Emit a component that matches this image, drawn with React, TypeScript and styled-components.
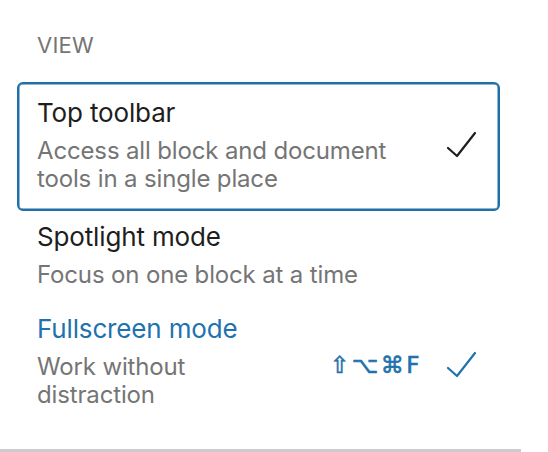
import styled, { createGlobalStyle } from "styled-components";

const GlobalStyle = createGlobalStyle`
  html, body {
    margin: 0;
    padding: 0;
    background: #ffffff;
  }
  body {
    font-family: Inter, "Noto Sans", "Liberation Sans", sans-serif;
    -webkit-font-smoothing: antialiased;
  }
`;

interface ViewOption {
  label: string;
  info: string;
  selected?: boolean;
  active?: boolean;
  checked?: boolean;
  shortcut?: string;
  infoWidth?: number;
}

const options: ViewOption[] = [
  {
    label: "Top toolbar",
    info: "Access all block and document tools in a single place",
    selected: true,
    checked: true,
  },
  {
    label: "Spotlight mode",
    info: "Focus on one block at a time",
  },
  {
    label: "Fullscreen mode",
    info: "Work without distraction",
    active: true,
    checked: true,
    shortcut: "⇧⌥⌘F",
    infoWidth: 230,
  },
];

function CheckIcon() {
  return (
    <svg width="32" height="32" viewBox="0 0 32 32" aria-hidden="true">
      <polyline
        points="2,19 11,27 29,4"
        fill="none"
        stroke="currentColor"
        strokeWidth="2.2"
        strokeLinecap="round"
        strokeLinejoin="round"
      />
    </svg>
  );
}

export default function App() {
  return (
    <>
      <GlobalStyle />
      <Panel>
        <GroupLabel>View</GroupLabel>
        <MenuGroup>
          {options.map((option) => (
            <MenuItem key={option.label} $selected={option.selected}>
              <ItemText $maxWidth={option.infoWidth}>
                <ItemLabel $active={option.active}>{option.label}</ItemLabel>
                <ItemInfo>{option.info}</ItemInfo>
              </ItemText>
              <Trailing $active={option.active}>
                {option.shortcut && <Shortcut>{option.shortcut}</Shortcut>}
                {option.checked && <CheckIcon />}
              </Trailing>
            </MenuItem>
          ))}
        </MenuGroup>
        <Separator />
      </Panel>
    </>
  );
}

const Panel = styled.div`
  width: 548px;
  height: 452px;
  overflow: hidden;
  padding-top: 31px;
  box-sizing: border-box;
`;

const GroupLabel = styled.div`
  margin-left: 37px;
  font-size: 22px;
  line-height: 28px;
  text-transform: uppercase;
  color: #757575;
  letter-spacing: 0.2px;
`;

const MenuGroup = styled.div`
  display: flex;
  flex-direction: column;
  margin: 23px 48px 0 17px;
`;

const MenuItem = styled.div<{ $selected?: boolean }>`
  display: flex;
  align-items: center;
  gap: 24px;
  border: 2px solid ${({ $selected }) => ($selected ? "#1f6fa8" : "transparent")};
  border-radius: 6px;
  box-shadow: ${({ $selected }) => ($selected ? "inset 0 0 0 0.5px #1f6fa8" : "none")};
  padding: ${({ $selected }) => ($selected ? "13px 20px 16px 18px" : "8px 20px 12px 18px")};
`;

const ItemText = styled.div<{ $maxWidth?: number }>`
  display: flex;
  flex-direction: column;
  gap: 8px;
  flex: 1;
  max-width: ${({ $maxWidth }) => ($maxWidth ? `${$maxWidth}px` : "none")};
  margin-right: auto;
  letter-spacing: -0.15px;
`;

const ItemLabel = styled.div<{ $active?: boolean }>`
  font-size: 26px;
  line-height: 32px;
  color: ${({ $active }) => ($active ? "#1f72ad" : "#1e1e1e")};
`;

const ItemInfo = styled.div`
  font-size: 24px;
  line-height: 28px;
  color: #757575;
`;

const Trailing = styled.div<{ $active?: boolean }>`
  display: flex;
  align-items: center;
  gap: 24px;
  padding-top: ${({ $active }) => ($active ? "7px" : "0")};
  color: ${({ $active }) => ($active ? "#1f72ad" : "#1e1e1e")};
`;

const Shortcut = styled.span`
  font-family: "DejaVu Sans", sans-serif;
  font-size: 23px;
  letter-spacing: 2.5px;
  -webkit-text-stroke: 0.6px currentColor;
`;

const Separator = styled.div`
  width: 521px;
  height: 4px;
  margin-top: 26px;
  background: #cccccc;
`;
